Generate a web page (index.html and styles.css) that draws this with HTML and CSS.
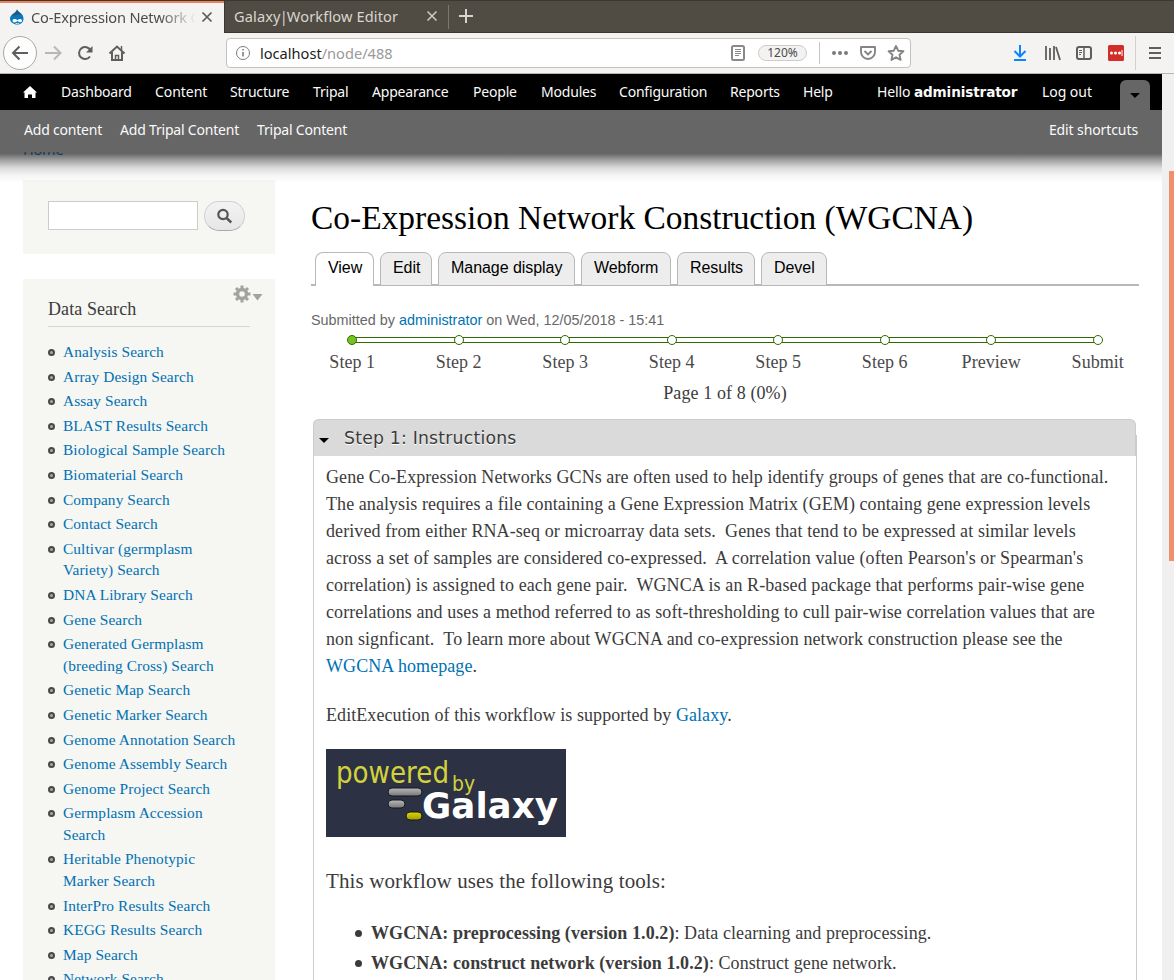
FILE: index.html
```html
<!DOCTYPE html>
<html lang="en">
<head>
<meta charset="utf-8">
<title>Co-Expression Network Construction (WGCNA)</title>
<link rel="stylesheet" href="styles.css">
</head>
<body>
<div class="tabstrip">
  <div class="btab btab-active">
    <svg class="drop" width="16" height="18" viewBox="0 0 16 18"><path d="M8 1.500C9 4 14.500 5.500 14.500 10.500c0 4-3 6-6.500 6s-7-2.500-7-6C1 6.500 7 5 8 1.500z" fill="#0678be"/><path d="M8 1.500C9 4 11 4.500 12.500 6.500 9 6 6 8 2.500 7.500 5 5.500 7 5 8 1.500z" fill="#25577b"/><path d="M3.500 12.600c0-2.300 3.500-2 5-.3 1.400-1.800 4.500-2 4.500.3 0 2.600-3 1.400-4.500.4C7 14.600 3.500 15.300 3.500 12.600z" fill="#fff"/><path d="M6.500 15.300q2 .7 3.800-.2" stroke="#fff" stroke-width=".8" fill="none"/></svg>
    <span class="btab-title fade">Co-Expression Network <i>C</i></span>
    <svg class="close" width="12" height="12" viewBox="0 0 12 12"><path d="M1.500 1.500l9 9M10.500 1.500l-9 9" stroke="#5c5b58" stroke-width="1.700"/></svg>
  </div>
  <div class="btab btab-other">
    <span class="btab-title">Galaxy<i>|</i>Workflow Editor</span>
    <svg class="close" width="12" height="12" viewBox="0 0 12 12"><path d="M1.500 1.500l9 9M10.500 1.500l-9 9" stroke="#c9c7c0" stroke-width="1.600"/></svg>
  </div>
  <svg class="plus" width="14" height="14" viewBox="0 0 14 14"><path d="M7 0v14M0 7h14" stroke="#d6d4ce" stroke-width="2"/></svg>
</div>
<div class="navbar">
  <svg class="nav-left" width="130" height="40" viewBox="0 33 130 40" fill="none" stroke="#5f5e5c" stroke-width="2">
    <circle cx="20" cy="53" r="16.500" fill="#fdfdfd" stroke="#aaa8a5" stroke-width="1"/>
    <path d="M28 53H13M19.500 46.500L13 53l6.500 6.500"/>
    <path d="M45 53h15M54 46.500l6.500 6.500-6.500 6.500" stroke="#b9b7b4"/>
    <path d="M90.500 50.500A6 6 0 1 0 90 56.500"/><path d="M92.500 46v6.500H86z" fill="#5f5e5c" stroke="none"/>
    <path d="M109.500 53.500l7.500-7 7.500 7"/><path d="M112 52v8h10v-8"/><path d="M121.500 46v4" stroke-width="1.500"/><path d="M115.500 60v-4.500h3V60z" stroke-width="1.500"/>
  </svg>
  <div class="urlbar">
    <svg width="16" height="16" viewBox="0 0 16 16" fill="none" stroke="#7d7d7d"><circle cx="8" cy="8" r="6.500"/><path d="M8 7v4.500M8 4v1.600" stroke-width="1.600"/></svg>
    <span class="url"><b>localhost</b>/node/488</span>
    <svg class="reader" width="14" height="16" viewBox="0 0 14 16" fill="none" stroke="#8a8987"><rect x="1" y="1" width="12" height="14" rx="1.500" stroke-width="2"/><path d="M4 4.500h6M4 6.500h6M4 8.500h6M4 10.500h4"/></svg>
    <span class="zoom">120%</span>
    <svg class="actions" width="90" height="24" viewBox="819 41 90 24" fill="none" stroke="#858482" stroke-width="1.900">
      <path d="M819.500 42v22" stroke="#c5c4c1" stroke-width="1"/>
      <g fill="#7b7a78" stroke="none"><circle cx="834" cy="53" r="2"/><circle cx="840" cy="53" r="2"/><circle cx="846" cy="53" r="2"/></g>
      <path d="M861 47h14v5a7 7 0 0 1-14 0z" stroke-linejoin="round"/><path d="M864.500 51l3.500 3.500 3.500-3.500"/>
      <path d="M896 46l2.200 4.700 5.200.6-3.900 3.500 1.100 5.100-4.600-2.600-4.600 2.600 1.100-5.100-3.900-3.500 5.200-.6z" stroke-linejoin="round"/>
    </svg>
  </div>
  <svg class="nav-right" width="174" height="40" viewBox="1000 33 174 40" fill="none" stroke="#5f5e5c" stroke-width="2">
    <path d="M1020 45v11M1014.500 51l5.500 5.500 5.500-5.500M1014 60h12" stroke="#0a84ff"/>
    <path d="M1046 46v14M1050 48v12M1054 46v14M1056 47l4 13" stroke-width="1.800"/>
    <rect x="1077" y="47" width="14" height="12" rx="2"/><path d="M1084 47v12" stroke-width="1.500"/><path d="M1079 50.500h3M1079 52.500h3M1079 54.500h2" stroke-width="1"/>
    <rect x="1108" y="45" width="16" height="16" rx="1.500" fill="#d32d27" stroke="none"/><g fill="#fff" stroke="none"><circle cx="1111.500" cy="53" r="1.500"/><circle cx="1115.500" cy="53" r="1.500"/><circle cx="1119.500" cy="53" r="1.500"/></g><path d="M1122 50v6" stroke="#fff" stroke-width="1"/>
    <path d="M1135.500 36v34" stroke="#d2d0cd" stroke-width="1"/>
    <path d="M1149 48h12M1149 53h12M1149 58h12"/>
  </svg>
</div>

<div class="viewport">
<div class="page">
  <div class="admin">
    <div class="admin-menu">
      <svg class="ahome" width="14" height="12" viewBox="0 0 14 12"><path d="M7 0l7 6.500h-1.500V12H9V8.500H5V12H1.500V6.500H0z" fill="#fff"/></svg>
      <a class="m1">Dashboard</a><a class="m2">Content</a><a class="m3">Structure</a><a class="m4">Tripal</a><a class="m5">Appearance</a><a class="m6">People</a><a class="m7">Modules</a><a class="m8">Configuration</a><a class="m9">Reports</a><a class="m10">Help</a><a class="m11">Hello <b>administrator</b></a><a class="m12">Log out</a>
      <span class="toggle"></span>
    </div>
    <div class="shortcuts"><a class="s1">Add content</a><a class="s2">Add Tripal Content</a><a>Tripal Content</a><a class="edit">Edit shortcuts</a></div>
    <div class="crumb"><span>Home</span></div>
    <div class="shade"></div>
  </div>

  <div class="columns">
    <aside class="sidebar">
      <div class="search">
        <div class="field"></div>
        <div class="go"><svg width="16" height="16" viewBox="0 0 16 16" fill="none" stroke="#555"><circle cx="6" cy="6.500" r="4.700" stroke-width="2.200"/><path d="M9.500 10l4.800 4.500" stroke-width="2.400"/></svg></div>
      </div>
      <div class="block">
        <svg class="gear" width="30" height="18" viewBox="0 0 30 18"><g stroke="#a2a39e" fill="none"><circle cx="9" cy="9" r="4.500" stroke-width="3.400"/><path d="M9 .5v3M9 14.500v3M.5 9h3M14.500 9h3M3 3l2 2M13 13l2 2M15 3l-2 2M5 13l-2 2" stroke-width="3"/></g><path d="M19.500 9h10l-5 6.500z" fill="#a2a39e"/></svg>
        <h2>Data Search</h2>
        <ul>
          <li>Analysis Search</li><li>Array Design Search</li><li>Assay Search</li><li>BLAST Results Search</li><li>Biological Sample Search</li><li>Biomaterial Search</li><li>Company Search</li><li>Contact Search</li><li>Cultivar (germplasm<br>Variety) Search</li><li>DNA Library Search</li><li>Gene Search</li><li>Generated Germplasm<br>(breeding Cross) Search</li><li>Genetic Map Search</li><li>Genetic Marker Search</li><li>Genome Annotation Search</li><li>Genome Assembly Search</li><li>Genome Project Search</li><li>Germplasm Accession<br>Search</li><li>Heritable Phenotypic<br>Marker Search</li><li>InterPro Results Search</li><li>KEGG Results Search</li><li>Map Search</li><li>Network Search</li>
        </ul>
      </div>
    </aside>

    <main>
      <h1>Co-Expression Network Construction (WGCNA)</h1>
      <nav class="tabs"><a class="on t1">View</a><a class="t2">Edit</a><a class="t3">Manage display</a><a class="t4">Webform</a><a class="t5">Results</a><a class="t6">Devel</a></nav>
      <p class="meta">Submitted by <a>administrator</a> on Wed, 12/05/2018 - 15:41</p>
      <div class="steps">
        <div class="step done"><i></i>Step 1</div><div class="step"><i></i>Step 2</div><div class="step"><i></i>Step 3</div><div class="step"><i></i>Step 4</div><div class="step"><i></i>Step 5</div><div class="step"><i></i>Step 6</div><div class="step"><i></i>Preview</div><div class="step"><i></i>Submit</div>
      </div>
      <p class="count">Page 1 of 8 (0%)</p>
      <section class="fieldset">
        <div class="legend"><span class="caret"></span><span class="legend-text">Step 1: Instructions</span></div>
        <div class="body">
          <p>Gene Co-Expression Networks GCNs are often used to help identify groups of genes that are co-functional.<br>The analysis requires a file containing a Gene Expression Matrix (GEM) containg gene expression levels<br><span class="wide">derived from either RNA-seq or microarray data sets.&nbsp; Genes that tend to be expressed at similar levels<br>across a set of samples are considered co-expressed.&nbsp; A correlation value (often Pearson's or Spearman's<br>correlation) is assigned to each gene pair.&nbsp; WGNCA is an R-based package that performs pair-wise gene</span><br>correlations and uses a method referred to as soft-thresholding to cull pair-wise correlation values that are<br><span class="wide">non signficant.&nbsp; To learn more about WGCNA and co-expression network construction please see the</span><br><a>WGCNA homepage</a>.</p>
          <p>EditExecution of this workflow is supported by <a>Galaxy</a>.</p>
          <svg class="galaxy" width="240" height="88" viewBox="0 0 240 88">
            <defs><linearGradient id="g" x2="0" y2="1"><stop stop-color="#b8b8b8"/><stop offset="1" stop-color="#777"/></linearGradient><linearGradient id="y" x2="0" y2="1"><stop stop-color="#dcd800"/><stop offset="1" stop-color="#a09c00"/></linearGradient></defs>
            <rect width="240" height="88" fill="#2c3143"/>
            <text x="10" y="33.500" class="gy" font-size="29.500" textLength="113" lengthAdjust="spacingAndGlyphs">powered</text>
            <text x="126" y="41.500" class="gy" font-size="20.500" textLength="23" lengthAdjust="spacingAndGlyphs">by</text>
            <g stroke="#15171f"><rect x="62" y="39" width="34" height="8" rx="4" fill="url(#g)"/><rect x="62" y="51" width="17" height="8" rx="4" fill="url(#g)"/><rect x="80" y="63" width="16" height="8" rx="4" fill="url(#y)"/></g>
            <text x="96" y="69" class="gw" font-size="35" textLength="136" lengthAdjust="spacingAndGlyphs">Galaxy</text>
          </svg>
          <h3>This workflow uses the following tools:</h3>
          <ul class="tools"><li><b>WGCNA: preprocessing (version 1.0.2)</b>: Data clearning and preprocessing.</li><li><b>WGCNA: construct network (version 1.0.2)</b>: Construct gene network.</li></ul>
        </div>
      </section>
    </main>
  </div>
</div>
<div class="scrollbar"><div class="thumb"></div></div>
</div>
</body>
</html>
```
FILE: styles.css
```css
*, *::before, *::after { box-sizing: border-box; }
body { margin: 0; width: 1174px; height: 980px; overflow: hidden; background: #fff; color: #3b3b3b; font-family: "Liberation Serif", serif; }
h1, h2, h3, p, ul { margin: 0; padding: 0; font-weight: normal; }
ul { list-style: none; }
a, main, li { white-space: nowrap; }
svg { display: block; flex: none; }

/* Browser chrome */
.tabstrip { display: flex; height: 33px; background: #504c44; border-top: 1px solid #3a3833; border-bottom: 1px solid #3a3833; }
.btab { display: flex; align-items: center; height: 32px; font: 14.6px "Noto Sans", sans-serif; }
.btab-active { width: 224px; background: #f4f3f2; border-top: 2px solid #f0805a; padding: 0 11px 2px 9px; color: #4c4c4c; }
.drop { margin-right: 6px; }
.btab-title { flex: 1; white-space: nowrap; overflow: hidden; }
.btab-title i { font-style: normal; }
.fade { letter-spacing: -.18px; margin-right: 5px; -webkit-mask-image: linear-gradient(90deg, #000 78%, transparent); mask-image: linear-gradient(90deg, #000 78%, transparent); }
.btab-other { width: 225px; height: 31px; padding: 0 11px 1px 9px; color: #d8d6cf; border-left: 1px solid #3a3833; background: linear-gradient(#7b7870, #7b7870) 100% 4px / 1px 24px no-repeat; }
.btab-other .btab-title { letter-spacing: .12px; }
.btab-other i { margin: 0 -1px; }
.plus { margin: 8px 0 0 10px; }
.navbar { display: flex; height: 41px; background: #f4f3f2; border-bottom: 1px solid #b8b6b3; }
.urlbar { display: flex; align-items: center; width: 685px; height: 30px; margin: 5px 0 0 96px; padding: 0 1px 0 8px; background: #fff; border: 1px solid #c5c1bd; border-radius: 4px; }
.url { font: 14.6px "Noto Sans", sans-serif; color: #999; margin-left: 9px; flex: 1; }
.url b { font-weight: normal; color: #222; }
.zoom { width: 49px; height: 16px; margin: 0 12px 0 13px; border: 1px solid #cfcdca; border-radius: 8px; background: #f3f2f1; color: #4a4a4a; font: 12px/14px "Noto Sans", sans-serif; text-align: center; }
.nav-right { margin-left: 89px; }

/* Page frame */
.viewport { display: flex; height: 906px; }
.page { position: relative; width: 1162px; overflow: hidden; }
.scrollbar { width: 12px; background: #f1f0ee; padding: 97px 0 0 7px; }
.thumb { height: 390px; background: #f0906c; }

/* Admin toolbar */
.admin { position: absolute; left: 0; right: 0; top: 0; z-index: 2; font: 14px "Noto Sans", sans-serif; letter-spacing: -.2px; color: #fafafa; }
.admin-menu { display: flex; height: 36px; line-height: 36px; background: #000; padding-left: 23px; }
.ahome { margin: 12px 24px 0 0; }
.m1 { width: 94px; } .m2 { width: 75px; } .m3 { width: 83px; } .m4 { width: 59px; } .m5 { width: 101px; } .m6 { width: 68px; }
.m7 { width: 78px; } .m8 { width: 111px; } .m9 { width: 73px; } .m10 { width: 74px; } .m11 { width: 165px; } .m12 { width: 78px; }
.m2, .m12 { letter-spacing: -.05px; }
.m11 { letter-spacing: -.12px; }
.m11 b { font-family: "DejaVu Sans", sans-serif; font-size: 13.600px; }
.toggle { display: flex; width: 30px; height: 30px; margin-top: 6px; background: #666; border-radius: 6px 6px 0 0; padding: 13px 0 0 10px; }
.toggle::before { content: ""; border: 5px solid transparent; border-top-color: #000; height: 0; }
.shortcuts { display: flex; height: 42px; line-height: 40px; background: #666; padding: 0 24px; }
.s1 { width: 96px; } .s2 { width: 137px; }
.edit { margin-left: auto; letter-spacing: -.1px; }
.crumb { height: 4px; margin-bottom: -3px; background: linear-gradient(#666 1px, transparent 1px); overflow: hidden; padding-left: 23px; }
.crumb span { display: block; margin-top: -11px; color: #123f5a; font-size: 14.500px; line-height: 16px; }
.shade { height: 30px; background: linear-gradient(rgba(0,0,0,.62), rgba(0,0,0,.36) 25%, rgba(0,0,0,.14) 50%, rgba(0,0,0,.04) 75%, rgba(0,0,0,0)); }

/* Sidebar */
.columns { display: flex; padding: 106px 0 0 23px; }
.sidebar { width: 252px; color: #0071b3; }
.search { display: flex; height: 74px; background: #f6f6f2; padding: 21px 0 0 25px; }
.field { width: 150px; height: 29px; background: #fff; border: 1px solid #ccc; margin-right: 6px; }
.go { display: flex; align-items: center; justify-content: center; width: 41px; height: 30px; border: 1px solid #d0d0d0; border-bottom-color: #aaa; border-radius: 15px; background: linear-gradient(#f3f3f3, #e6e6e6); }
.block { position: relative; height: 740px; margin-top: 25px; padding: 18px 25px 0; background: #f6f6f2; }
.gear { position: absolute; left: 210px; top: 6px; }
h2 { height: 30px; border-bottom: 1px solid #d6d6d6; color: #3b3b3b; font-size: 18px; letter-spacing: .08px; line-height: 25px; margin-bottom: 14px; }
.sidebar li { position: relative; margin-bottom: 3px; padding-left: 15px; font-size: 15.360px; letter-spacing: .1px; line-height: 21.600px; }
.sidebar li::before { content: ""; position: absolute; left: 0; top: 8px; width: 7px; height: 7px; border: 2px solid #484848; border-radius: 50%; background: #aaa; }

/* Main column */
main { width: 828px; margin-left: 36px; font-size: 18px; }
main a { color: #0071b3; }
h1 { height: 72px; line-height: 75px; color: #000; font-size: 33.450px; }
.tabs { display: flex; gap: 6px; height: 34px; padding-left: 4px; background: linear-gradient(#b8b8b8, #b8b8b8) 0 100% / 100% 2px no-repeat; font: 16px/30px "Liberation Sans", sans-serif; letter-spacing: -.05px; }
.tabs a { height: 34px; border: 1px solid #b8b8b8; border-radius: 8px 8px 0 0; background: #ededed; color: #000; padding-left: 12px; }
.tabs .on { background: #fff; border-bottom: 0; }
.t1 { width: 59px; } .t2 { width: 52px; } .t3 { width: 137px; } .t4 { width: 90px; } .t5 { width: 78px; } .t6 { width: 66px; }
.meta { height: 49px; padding-top: 25px; font: 14.400px/18px "Liberation Sans", sans-serif; color: #686868; }
.steps { display: flex; height: 46px; margin-left: -12px; color: #494949; }
.step { position: relative; flex: none; width: 106.500px; text-align: center; line-height: 22px; padding: 16px 0 0; letter-spacing: .05px; }
.step i { position: absolute; z-index: 1; left: 48.400px; top: 0; width: 10px; height: 10px; border: 1px solid #306b00; border-radius: 50%; background: #fff; }
.step.done i { background: #74c421; }
.step:not(:last-child)::after { content: ""; position: absolute; left: 53px; top: 2px; width: 107px; height: 6px; border: solid #306b00; border-width: 1px 0; }
.count { height: 38px; line-height: 25px; text-align: center; letter-spacing: .1px; }

/* Collapsible fieldset */
.fieldset { width: 824px; height: 600px; margin-left: 2px; border-left: 1px solid #ccc; background: linear-gradient(#ccc, #ccc) 100% 16px / 1px 600px no-repeat; border-radius: 6px 0 0 0; }
.legend { display: flex; width: 823px; height: 37px; margin-left: -1px; background: #dadada; border: 1px solid #ccc; border-bottom: 0; border-radius: 6px 6px 0 0; font: 17.280px/36px "DejaVu Sans", sans-serif; letter-spacing: .2px; }
.caret { width: 0; height: 0; border: 5px solid transparent; border-top-color: #000; margin: 18px 15px 0 5px; }
.legend-text { text-shadow: 0 1px 0 #fff; }
.body { padding: 8px 0 0 12px; line-height: 27px; letter-spacing: .073px; }
.wide { letter-spacing: .097px; }
.body p { margin-bottom: 22px; }
.galaxy { margin-top: -2px; letter-spacing: 0; }
.gy { font-family: "DejaVu Sans", sans-serif; fill: #d3d13c; }
.gw { font-family: "DejaVu Sans", sans-serif; font-weight: bold; fill: #fff; }
h3 { margin: 29px 0 22px; font-size: 21px; line-height: 30px; letter-spacing: .12px; }
.tools li { position: relative; padding-left: 45px; line-height: 30px; }
.tools li::before { content: ""; position: absolute; left: 29px; top: 12px; width: 7px; height: 7px; border-radius: 50%; background: #3b3b3b; }
```
